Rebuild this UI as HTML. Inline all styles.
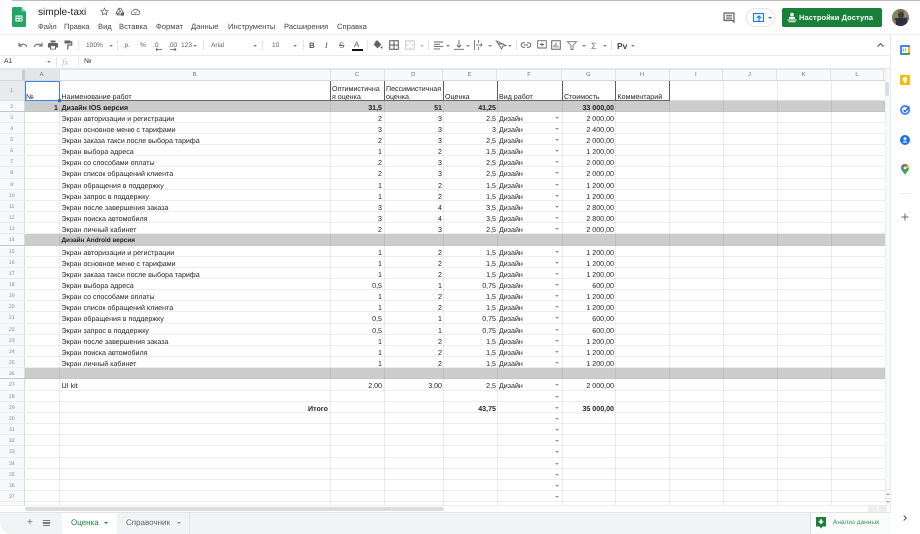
<!DOCTYPE html>
<html lang="ru"><head><meta charset="utf-8"><title>simple-taxi</title>
<style>
*{box-sizing:border-box;margin:0;padding:0}
html,body{width:920px;height:534px;overflow:hidden;background:#fff;font-family:"Liberation Sans",sans-serif;color:#222;text-rendering:geometricPrecision}
#w{position:absolute;left:0;top:0;width:920px;height:534px;overflow:hidden;filter:blur(.3px)}
.abs,.t{position:absolute}
.t{white-space:nowrap;line-height:10px}
#top{position:absolute;left:12px;right:0;top:0;height:1px;background:#bbb}
.menu{font-size:7.6px;color:#444;top:21.500px}
.tb{font-size:6.6px;color:#5f6368;top:40.500px}
.sep{position:absolute;width:1px;background:#e3e5e8;top:40px;height:10px}
.ar{position:absolute;width:0;height:0;border-left:2px solid transparent;border-right:2px solid transparent;border-top:2.4px solid #888}
svg{position:absolute;overflow:visible}
#hdr{position:absolute;left:0;top:69px;width:885px;height:12px;background:#f8f9fa;border-top:1px solid #e3e5e8;border-bottom:1px solid #d5d7d9}
#hdr span{position:absolute;top:0;height:10px;line-height:11px;text-align:center;font-size:5.8px;color:#777;border-right:1px solid #dfe1e3}
#grid{position:absolute;left:0;top:81px;width:885px;height:424px;overflow:hidden}
.r{position:relative;height:11.17px;font-size:7.100px;line-height:14.600px;color:#222;border-bottom:1px solid #eceded}
.r span{position:absolute;top:0;white-space:nowrap}
.n{left:0;width:24.5px;height:100%;text-align:center;background:#f8f9fa;font-size:5.2px;line-height:12.500px;color:#888;border-right:1px solid #dadcde}
.a{right:827px}
.b{left:61.5px}
.c{right:503px}
.d{right:443px}
.e{right:389px}
.f{left:499px}
.g{right:271px}
.v{left:554.5px;top:5px!important;width:0;height:0;border-left:2px solid transparent;border-right:2px solid transparent;border-top:2.2px solid #999}
.gr{background:#ccc;border-bottom:1px solid #c6c6c6;font-weight:bold}
.gr .n{font-weight:normal;background:#f8f9fa}
.vl{position:absolute;top:81px;height:424px;width:1px;background:rgba(0,0,0,.07)}
#r1{position:relative;height:19.5px;font-size:7.100px;line-height:8.6px;color:#222;border-bottom:1px solid #ddd}
#r1 span{position:absolute;bottom:-2.500px;white-space:nowrap}
#r1 i{position:absolute;top:0;height:19.5px;width:1px;background:#666}
#side{position:absolute;left:890px;top:35px;width:1px;height:478px;background:#e8eaed}
#tabs{position:absolute;left:0;top:512px;width:890px;height:21.5px;background:#f1f3f4;border-top:1px solid #e2e3e5;border-bottom-left-radius:12px}
</style></head><body><div id="w">
<div id="top"></div>

<svg style="left:12px;top:7px" width="14" height="20" viewBox="0 0 14 20"><path d="M1.5 0H9.5L14 4.5V18.5A1.5 1.5 0 0 1 12.5 20H1.5A1.5 1.5 0 0 1 0 18.5V1.5A1.5 1.5 0 0 1 1.5 0Z" fill="#23a566"/><path d="M9.5 0V4.5H14Z" fill="#8ed1b1"/><path d="M3.5 8.5H10.5V14.5H3.5ZM4.5 9.5V11H6.5V9.5ZM7.5 9.5V11H9.5V9.5ZM4.5 12V13.5H6.5V12ZM7.5 12V13.5H9.5V12Z" fill="#fff" fill-rule="evenodd"/></svg>
<div class="t" style="left:38px;top:7.500px;font-size:10.100px;color:#222">simple-taxi</div>
<svg style="left:100px;top:7px" width="9" height="9" viewBox="0 0 24 24"><path d="M12 3l2.8 6.2 6.7.7-5 4.5 1.4 6.6L12 17.6 6.1 21l1.4-6.6-5-4.5 6.7-.7z" fill="none" stroke="#5f6368" stroke-width="2"/></svg>
<svg style="left:115px;top:7px" width="10" height="10" viewBox="0 0 24 24"><path d="M9 3h5l7 12-2.5 4H6L2.500 15zM9 3l5 9M6 19l5-9M2.500 15H13" fill="none" stroke="#5f6368" stroke-width="2"/><circle cx="18" cy="17" r="4" fill="#5f6368"/></svg>
<svg style="left:131px;top:8px" width="9" height="8" viewBox="0 0 24 20"><path d="M6 17A5 5 0 0 1 5.500 7 7.500 7.500 0 0 1 19 6.500 5.300 5.300 0 0 1 18.500 17Z" fill="none" stroke="#5f6368" stroke-width="2.200"/><path d="M8.500 11l3 2.500 4-4.500" fill="none" stroke="#5f6368" stroke-width="1.800"/></svg>

<div class="t menu" style="left:38px">Файл</div>
<div class="t menu" style="left:64px">Правка</div>
<div class="t menu" style="left:98px">Вид</div>
<div class="t menu" style="left:119px">Вставка</div>
<div class="t menu" style="left:156px">Формат</div>
<div class="t menu" style="left:191px">Данные</div>
<div class="t menu" style="left:228px">Инструменты</div>
<div class="t menu" style="left:284px">Расширения</div>
<div class="t menu" style="left:337px">Справка</div>

<svg style="left:723px;top:12px" width="12" height="11" viewBox="0 0 12 11"><path d="M1 1H11V10L9.500 8.500H1Z" fill="#f1f3f4" stroke="#5f6368" stroke-width="1.200"/><path d="M3 3.300H9M3 5H9M3 6.700H9" stroke="#5f6368" stroke-width=".8"/></svg>
<div class="abs" style="left:746px;top:8px;width:29px;height:19px;border:1px solid #e3e5e8;border-radius:10px;background:#fff"></div>
<div class="abs" style="left:753px;top:13px;width:11px;height:9px;border:1.400px solid #1a73e8;background:#e8f0fe"></div>
<svg style="left:755.500px;top:14.500px" width="6" height="6" viewBox="0 0 6 6"><path d="M3 6V1.500M1 3L3 1 5 3" fill="none" stroke="#1a73e8" stroke-width="1.100"/></svg>
<div class="ar" style="left:768px;top:16.500px;border-top-color:#1a73e8"></div>
<div class="abs" style="left:782px;top:8px;width:100px;height:19px;background:#188038;border-radius:2px"></div>
<svg style="left:787px;top:12px" width="10" height="11" viewBox="0 0 10 11"><circle cx="5" cy="2.500" r="1.800" fill="#fff"/><path d="M2.500 4.800H7.500L8 7H2ZM0.500 7.500H9.500V8.500H0.500ZM1.500 9.300H8.500V10.300H1.500Z" fill="#fff"/></svg>
<div class="t" style="left:799px;top:12.500px;font-size:7.500px;font-weight:bold;color:#fff;letter-spacing:.1px">Настройки Доступа</div>
<svg style="left:892px;top:9px" width="17" height="17" viewBox="0 0 17 17"><defs><clipPath id="av"><circle cx="8.500" cy="8.500" r="8.500"/></clipPath></defs><g clip-path="url(#av)"><rect width="17" height="17" fill="#6f6f5c"/><rect x="0" y="0" width="6" height="10" fill="#7a8a63"/><rect x="12" y="0" width="5" height="8" fill="#8c8a78"/><rect x="3" y="9" width="12" height="8" fill="#2b3042"/><circle cx="9" cy="6" r="3" fill="#4a3a30"/><rect x="0" y="11" width="4" height="6" fill="#9b6a4a"/></g></svg>

<div class="abs" style="left:0;top:34px;width:920px;height:1px;background:#eceef0"></div>
<div class="abs" style="left:0;top:55px;width:890px;height:1px;background:#e8eaed"></div>

<svg style="left:18px;top:41px" width="10" height="8" viewBox="0 0 10 8"><path d="M1 1.500V5H4.500M1.300 4.800C3 2.500 7 2.200 9 5.800" fill="none" stroke="#5f6368" stroke-width="1"/></svg>
<svg style="left:33px;top:41px" width="10" height="8" viewBox="0 0 10 8"><path d="M9 1.500V5H5.500M8.700 4.800C7 2.500 3 2.200 1 5.800" fill="none" stroke="#5f6368" stroke-width="1"/></svg>
<svg style="left:48px;top:40px" width="10" height="10" viewBox="0 0 10 10"><path d="M2.500 0.500H7.500V2.500H2.500ZM1 3H9A1 1 0 0 1 10 4V7.500H8V9.500H2V7.500H0V4A1 1 0 0 1 1 3Z" fill="#5f6368"/><rect x="3" y="6" width="4" height="2.700" fill="#fff"/></svg>
<svg style="left:64px;top:40px" width="8" height="10" viewBox="0 0 8 10"><path d="M0.500 0.500H6.500V3.500H0.500Z" fill="#5f6368"/><path d="M6.500 2H7.700V5H3.800V9.500" fill="none" stroke="#5f6368" stroke-width="1.200"/></svg>
<div class="sep" style="left:78px"></div>
<div class="t tb" style="left:86px">100%</div><div class="ar" style="left:109px;top:44.500px"></div>
<div class="sep" style="left:117px"></div>
<div class="t tb" style="left:124.500px">р.</div>
<div class="t tb" style="left:140px">%</div>
<div class="t tb" style="left:153px">.0</div>
<svg style="left:155px;top:48px" width="7" height="3" viewBox="0 0 7 3"><path d="M7 1.500H1M2.500 0L1 1.500 2.500 3" fill="none" stroke="#555" stroke-width=".7"/></svg>
<div class="t tb" style="left:168px">.00</div>
<svg style="left:170px;top:48px" width="7" height="3" viewBox="0 0 7 3"><path d="M0 1.500H6M4.500 0L6 1.500 4.500 3" fill="none" stroke="#555" stroke-width=".7"/></svg>
<div class="t tb" style="left:181px">123</div><div class="ar" style="left:193px;top:44.500px"></div>
<div class="sep" style="left:203px"></div>
<div class="t tb" style="left:211px">Arial</div><div class="ar" style="left:253px;top:44.500px"></div>
<div class="sep" style="left:262px"></div>
<div class="t tb" style="left:272px">10</div><div class="ar" style="left:293px;top:44.500px"></div>
<div class="sep" style="left:303px"></div>
<div class="t" style="left:309px;top:40.500px;font-size:8px;font-weight:bold;color:#555">B</div>
<div class="t" style="left:325px;top:40.500px;font-size:8px;font-style:italic;font-family:'Liberation Serif',serif;color:#555">I</div>
<div class="t" style="left:339px;top:40.500px;font-size:8px;color:#666;text-decoration:line-through">S</div>
<div class="t" style="left:354px;top:39.500px;font-size:8px;color:#555">A</div>
<div class="abs" style="left:352px;top:49px;width:11px;height:2px;background:#111"></div>
<div class="sep" style="left:367px"></div>
<svg style="left:373px;top:40px" width="10" height="10" viewBox="0 0 10 10"><path d="M4 0.500L8 4.500 4.500 8 1 4.500ZM2.500 1L4 2.500" fill="#5f6368" stroke="#5f6368" stroke-width=".6"/><circle cx="8.500" cy="7.500" r="1" fill="#5f6368"/></svg>
<svg style="left:389px;top:40px" width="10" height="10" viewBox="0 0 10 10"><path d="M.700.700H9.300V9.300H.700ZM5 1V9M1 5H9" fill="none" stroke="#555" stroke-width="1"/></svg>
<svg style="left:405px;top:40px" width="10" height="10" viewBox="0 0 10 10"><path d="M.700.700H9.300V9.300H.700ZM1 5H3.500M6.500 5H9M5 1V3M5 7V9" fill="none" stroke="#c9ccd0" stroke-width="1"/></svg>
<div class="ar" style="left:419.500px;top:44.500px;border-top-color:#bbb"></div>
<div class="sep" style="left:428px"></div>
<svg style="left:434px;top:41px" width="10" height="9" viewBox="0 0 10 9"><path d="M0 1H9M0 3.300H6M0 5.600H9M0 7.900H6" stroke="#666" stroke-width=".9"/></svg><div class="ar" style="left:446px;top:44.500px"></div>
<svg style="left:454px;top:40px" width="10" height="10" viewBox="0 0 10 10"><path d="M0 9.300H10M5 0V7M2.800 5L5 7.200 7.200 5" fill="none" stroke="#666" stroke-width=".9"/></svg><div class="ar" style="left:466px;top:44.500px"></div>
<svg style="left:474px;top:40px" width="10" height="10" viewBox="0 0 10 10"><path d="M.600 0V10M2 5H8M6.500 3.500L8 5 6.500 6.500M4.500 0V3M4.500 7V10" fill="none" stroke="#666" stroke-width=".8"/></svg><div class="ar" style="left:488px;top:44.500px"></div>
<svg style="left:496px;top:40px" width="10" height="10" viewBox="0 0 10 10"><path d="M0.500 1L5.500 9 7 6 10 5.500ZM2 4H8" fill="none" stroke="#666" stroke-width=".9"/></svg><div class="ar" style="left:508px;top:44.500px"></div>
<div class="sep" style="left:516px"></div>
<svg style="left:521px;top:42px" width="10" height="6" viewBox="0 0 10 6"><path d="M4 .700H2.500A2.300 2.300 0 0 0 2.500 5.300H4M6 .700H7.500A2.300 2.300 0 0 1 7.500 5.300H6M3 3H7" fill="none" stroke="#666" stroke-width="1"/></svg>
<svg style="left:537px;top:40px" width="10" height="10" viewBox="0 0 10 10"><path d="M.700.700H9.300V8H.700ZM5 2.500V6.500M3 4.500H7" fill="none" stroke="#666" stroke-width=".9"/></svg>
<svg style="left:551px;top:40px" width="10" height="10" viewBox="0 0 10 10"><path d="M.700.700H9.300V9.300H.700Z" fill="none" stroke="#666" stroke-width="1"/><path d="M3 7.500V5M5 7.500V2.800M7 7.500V6" stroke="#666" stroke-width="1"/></svg>
<svg style="left:567px;top:41px" width="10" height="9" viewBox="0 0 10 9"><path d="M.500.700H9.500L6 4.500V8.500H4V4.500Z" fill="none" stroke="#777" stroke-width=".9"/></svg><div class="ar" style="left:582px;top:44.500px"></div>
<div class="t" style="left:591px;top:40.500px;font-size:9px;color:#777">Σ</div><div class="ar" style="left:603px;top:44.500px"></div>
<div class="sep" style="left:611px"></div>
<div class="t" style="left:617px;top:40.500px;font-size:8.500px;font-weight:bold;color:#444">Рv</div><div class="ar" style="left:631px;top:44.500px"></div>
<svg style="left:877px;top:43px" width="7" height="4" viewBox="0 0 7 4"><path d="M.500 3.500L3.500.700 6.500 3.500" fill="none" stroke="#5f6368" stroke-width="1.200"/></svg>

<div class="t" style="left:4px;top:57px;font-size:6.800px;color:#333">A1</div>
<div class="ar" style="left:47px;top:61px"></div>
<div class="abs" style="left:56px;top:57px;width:1px;height:10px;background:#e3e5e8"></div>
<div class="t" style="left:62px;top:56.500px;font-size:9px;font-style:italic;font-family:'Liberation Serif',serif;color:#bbb">fx</div>
<div class="abs" style="left:78px;top:57px;width:1px;height:10px;background:#e3e5e8"></div>
<div class="t" style="left:84px;top:57px;font-size:6.900px;color:#333">№</div>
<div class="abs" style="left:0;top:68px;width:890px;height:1px;background:#e3e5e8"></div>

<div id="hdr">
<span style="left:0;width:24.500px;background:#eceef0;border-right:3px solid #c8cacc"></span>
<span style="left:24.500px;width:35px;background:#e3e5e7">A</span>
<span style="left:59.500px;width:271px">B</span>
<span style="left:330.500px;width:54px">C</span>
<span style="left:384.500px;width:58.500px">D</span>
<span style="left:443px;width:54px">E</span>
<span style="left:497px;width:65px">F</span>
<span style="left:562px;width:53.500px">G</span>
<span style="left:615.500px;width:54px">H</span>
<span style="left:669.500px;width:53.500px">I</span>
<span style="left:723px;width:54px">J</span>
<span style="left:777px;width:54px">K</span>
<span style="left:831px;width:53px">L</span>
</div>

<div id="grid">
<div id="r1"><span class="n" style="bottom:0;top:0;line-height:20px;background:#e8eaed">1</span>
<span style="left:26px">№</span><span class="b">Наименование работ</span>
<span style="left:332px">Оптимистична<br>я оценка</span><span style="left:386px">Пессимистичная<br>оценка</span><span style="left:445px">Оценка</span><span style="left:499px">Вид работ</span><span style="left:564px">Стоимость</span><span style="left:617.500px">Комментарий</span>
<i style="left:330px"></i><i style="left:384px"></i><i style="left:443px"></i><i style="left:497px"></i><i style="left:562px"></i><i style="left:615px"></i><i style="left:669px"></i>
<b style="position:absolute;left:60px;width:610px;bottom:-1px;height:1px;background:#666"></b>
</div>
<div class="r gr"><span class="n">2</span><span class="a">1</span><span class="b">Дизайн IOS версия</span><span class="c">31,5</span><span class="d">51</span><span class="e">41,25</span><span class="g">33 000,00</span></div>
<div class="r"><span class="n">3</span><span class="b">Экран авторизации и регистрации</span><span class="c">2</span><span class="d">3</span><span class="e">2,5</span><span class="f">Дизайн</span><span class="v"></span><span class="g">2 000,00</span></div>
<div class="r"><span class="n">4</span><span class="b">Экран основное меню с тарифами</span><span class="c">3</span><span class="d">3</span><span class="e">3</span><span class="f">Дизайн</span><span class="v"></span><span class="g">2 400,00</span></div>
<div class="r"><span class="n">5</span><span class="b">Экран заказа такси после выбора тарифа</span><span class="c">2</span><span class="d">3</span><span class="e">2,5</span><span class="f">Дизайн</span><span class="v"></span><span class="g">2 000,00</span></div>
<div class="r"><span class="n">6</span><span class="b">Экран выбора адреса</span><span class="c">1</span><span class="d">2</span><span class="e">1,5</span><span class="f">Дизайн</span><span class="v"></span><span class="g">1 200,00</span></div>
<div class="r"><span class="n">7</span><span class="b">Экран со способами оплаты</span><span class="c">2</span><span class="d">3</span><span class="e">2,5</span><span class="f">Дизайн</span><span class="v"></span><span class="g">2 000,00</span></div>
<div class="r"><span class="n">8</span><span class="b">Экран список обращений клиента</span><span class="c">2</span><span class="d">3</span><span class="e">2,5</span><span class="f">Дизайн</span><span class="v"></span><span class="g">2 000,00</span></div>
<div class="r"><span class="n">9</span><span class="b">Экран обращения в поддержку</span><span class="c">1</span><span class="d">2</span><span class="e">1,5</span><span class="f">Дизайн</span><span class="v"></span><span class="g">1 200,00</span></div>
<div class="r"><span class="n">10</span><span class="b">Экран запрос в поддержку</span><span class="c">1</span><span class="d">2</span><span class="e">1,5</span><span class="f">Дизайн</span><span class="v"></span><span class="g">1 200,00</span></div>
<div class="r"><span class="n">11</span><span class="b">Экран после завершения заказа</span><span class="c">3</span><span class="d">4</span><span class="e">3,5</span><span class="f">Дизайн</span><span class="v"></span><span class="g">2 800,00</span></div>
<div class="r"><span class="n">12</span><span class="b">Экран поиска автомобиля</span><span class="c">3</span><span class="d">4</span><span class="e">3,5</span><span class="f">Дизайн</span><span class="v"></span><span class="g">2 800,00</span></div>
<div class="r"><span class="n">13</span><span class="b">Экран личный кабинет</span><span class="c">2</span><span class="d">3</span><span class="e">2,5</span><span class="f">Дизайн</span><span class="v"></span><span class="g">2 000,00</span></div>
<div class="r gr"><span class="n">14</span><span class="b" style="font-size:6.400px">Дизайн Android версия</span></div>
<div class="r"><span class="n">15</span><span class="b">Экран авторизации и регистрации</span><span class="c">1</span><span class="d">2</span><span class="e">1,5</span><span class="f">Дизайн</span><span class="v"></span><span class="g">1 200,00</span></div>
<div class="r"><span class="n">16</span><span class="b">Экран основное меню с тарифами</span><span class="c">1</span><span class="d">2</span><span class="e">1,5</span><span class="f">Дизайн</span><span class="v"></span><span class="g">1 200,00</span></div>
<div class="r"><span class="n">17</span><span class="b">Экран заказа такси после выбора тарифа</span><span class="c">1</span><span class="d">2</span><span class="e">1,5</span><span class="f">Дизайн</span><span class="v"></span><span class="g">1 200,00</span></div>
<div class="r"><span class="n">18</span><span class="b">Экран выбора адреса</span><span class="c">0,5</span><span class="d">1</span><span class="e">0,75</span><span class="f">Дизайн</span><span class="v"></span><span class="g">600,00</span></div>
<div class="r"><span class="n">19</span><span class="b">Экран со способами оплаты</span><span class="c">1</span><span class="d">2</span><span class="e">1,5</span><span class="f">Дизайн</span><span class="v"></span><span class="g">1 200,00</span></div>
<div class="r"><span class="n">20</span><span class="b">Экран список обращений клиента</span><span class="c">1</span><span class="d">2</span><span class="e">1,5</span><span class="f">Дизайн</span><span class="v"></span><span class="g">1 200,00</span></div>
<div class="r"><span class="n">21</span><span class="b">Экран обращения в поддержку</span><span class="c">0,5</span><span class="d">1</span><span class="e">0,75</span><span class="f">Дизайн</span><span class="v"></span><span class="g">600,00</span></div>
<div class="r"><span class="n">22</span><span class="b">Экран запрос в поддержку</span><span class="c">0,5</span><span class="d">1</span><span class="e">0,75</span><span class="f">Дизайн</span><span class="v"></span><span class="g">600,00</span></div>
<div class="r"><span class="n">23</span><span class="b">Экран после завершения заказа</span><span class="c">1</span><span class="d">2</span><span class="e">1,5</span><span class="f">Дизайн</span><span class="v"></span><span class="g">1 200,00</span></div>
<div class="r"><span class="n">24</span><span class="b">Экран поиска автомобиля</span><span class="c">1</span><span class="d">2</span><span class="e">1,5</span><span class="f">Дизайн</span><span class="v"></span><span class="g">1 200,00</span></div>
<div class="r"><span class="n">25</span><span class="b">Экран личный кабинет</span><span class="c">1</span><span class="d">2</span><span class="e">1,5</span><span class="f">Дизайн</span><span class="v"></span><span class="g">1 200,00</span></div>
<div class="r gr"><span class="n">26</span></div>
<div class="r"><span class="n">27</span><span class="b">UI kit</span><span class="c">2,00</span><span class="d">3,00</span><span class="e">2,5</span><span class="f">Дизайн</span><span class="v"></span><span class="g">2 000,00</span></div>
<div class="r"><span class="n">28</span><span class="v"></span></div>
<div class="r" style="font-weight:bold"><span class="n" style="font-weight:normal">29</span><span style="right:557px">Итого</span><span class="e">43,75</span><span class="v"></span><span class="g">35 000,00</span></div>
<div class="r"><span class="n">30</span><span class="v"></span></div>
<div class="r"><span class="n">31</span><span class="v"></span></div>
<div class="r"><span class="n">32</span><span class="v"></span></div>
<div class="r"><span class="n">33</span><span class="v"></span></div>
<div class="r"><span class="n">34</span><span class="v"></span></div>
<div class="r"><span class="n">35</span><span class="v"></span></div>
<div class="r"><span class="n">36</span><span class="v"></span></div>
<div class="r"><span class="n">37</span><span class="v"></span></div>
<div class="r"><span class="n"></span></div>
</div>

<div class="vl" style="left:59px"></div><div class="vl" style="left:330px"></div><div class="vl" style="left:384px"></div><div class="vl" style="left:443px"></div><div class="vl" style="left:497px"></div><div class="vl" style="left:562px"></div><div class="vl" style="left:615px"></div><div class="vl" style="left:669px"></div><div class="vl" style="left:723px"></div><div class="vl" style="left:777px"></div><div class="vl" style="left:831px"></div>

<div class="abs" style="left:25px;top:81px;width:35px;height:20px;border:1px solid #3b82ea"></div>
<div class="abs" style="left:58px;top:99px;width:3px;height:3px;background:#1a73e8"></div>

<div class="abs" style="left:885px;top:69px;width:5px;height:444px;background:#f8f9fa;border-left:1px solid #eceef0"></div>
<div class="abs" style="left:885px;top:82px;width:4px;height:14px;background:#dadce0;border-radius:2px"></div>
<div class="abs" style="left:885px;top:489px;width:5px;height:1px;background:#e3e3e3"></div>
<div class="abs" style="left:885px;top:498px;width:5px;height:1px;background:#e3e3e3"></div>
<div class="ar" style="left:885.500px;top:493px;border-top:0;border-bottom:2px solid #aaa"></div>
<div class="ar" style="left:885.500px;top:501px;border-top-width:2px;border-top-color:#aaa"></div>

<div class="abs" style="left:0;top:505px;width:890px;height:7px;background:#fff;border-top:1px solid #eceef0"></div>
<div class="abs" style="left:25px;top:507px;width:419px;height:4px;background:#dadce0;border-radius:2px"></div>
<div class="abs" style="left:868px;top:506px;width:9px;height:6px;background:#eceef0"></div>
<div class="abs" style="left:878px;top:506px;width:9px;height:6px;background:#eceef0"></div>

<div id="tabs">
<div class="t" style="left:27px;top:5px;font-size:10px;color:#666">+</div>
<div class="abs" style="left:43px;top:6.500px;width:7px;height:1.500px;background:#777"></div>
<div class="abs" style="left:43px;top:9px;width:7px;height:1.500px;background:#777"></div>
<div class="abs" style="left:43px;top:11.500px;width:7px;height:1.500px;background:#777"></div>
<div class="abs" style="left:62px;top:0;width:55px;height:21px;background:#fff"></div>
<div class="t" style="left:71px;top:5px;font-size:8px;color:#188038">Оценка</div>
<div class="ar" style="left:104px;top:8.500px;border-top-color:#188038"></div>
<div class="t" style="left:126px;top:5px;font-size:8px;color:#5f6368">Справочник</div>
<div class="ar" style="left:176.500px;top:8.500px"></div>
<div class="abs" style="left:189px;top:0;width:1px;height:21px;background:#e2e3e5"></div>
<div class="abs" style="left:810px;top:0;width:80px;height:20.500px;background:#fafbfb;border-left:1px solid #dadce0"></div>
<svg style="left:816px;top:4px" width="10" height="12" viewBox="0 0 10 12"><path d="M0 0H10V9.500H6.500L5 11.500 3.500 9.500H0Z" fill="#188038"/><path d="M5 2.300V7M2.700 4.700H7.300" stroke="#fff" stroke-width="1.600"/></svg>
<div class="t" style="left:833px;top:5px;font-size:6.500px;color:#188038;opacity:.85">Анализ данных</div>
</div>

<div id="side"></div>
<svg style="left:900px;top:45px" width="10" height="10" viewBox="0 0 10 10"><rect width="10" height="10" rx="1" fill="#4285f4"/><rect x="2" y="2" width="6" height="6" fill="#fff"/><path d="M8 2H10V8H8Z" fill="#fbbc04"/><path d="M2 8H8V10H2Z" fill="#34a853"/><path d="M8 8H10L8 10Z" fill="#ea4335"/><path d="M3.500 3.500V6.500M5.500 3.500V6.500" stroke="#4285f4" stroke-width=".7"/></svg>
<svg style="left:900px;top:75px" width="10" height="10" viewBox="0 0 10 10"><rect width="10" height="10" rx="1" fill="#fbbc04"/><circle cx="5" cy="4.200" r="2.300" fill="#fff"/><rect x="3.800" y="6" width="2.400" height="2" fill="#fff"/></svg>
<svg style="left:900px;top:105px" width="10" height="10" viewBox="0 0 10 10"><circle cx="5" cy="5" r="4" fill="none" stroke="#4285f4" stroke-width="2"/><path d="M3.500 5L5 6.500 9.500 1.500" fill="none" stroke="#1a5cc8" stroke-width="1.300"/></svg>
<svg style="left:900px;top:135px" width="10" height="10" viewBox="0 0 10 10"><circle cx="5" cy="5" r="5" fill="#1a73e8"/><circle cx="5" cy="3.700" r="1.500" fill="#fff"/><path d="M2.500 7.500C3 5.800 7 5.800 7.500 7.500Z" fill="#fff"/></svg>
<svg style="left:901px;top:164px" width="8" height="11" viewBox="0 0 8 11"><path d="M4 0C1.800 0 0 1.700 0 3.900 0 6.500 3 8.500 4 11 5 8.500 8 6.500 8 3.900 8 1.700 6.200 0 4 0Z" fill="#34a853"/><path d="M4 0C5 0 6 .4 6.800 1.100L1.200 7C.4 6 0 5 0 3.900 0 1.700 1.800 0 4 0Z" fill="#4285f4"/><path d="M1.200 1.100L4 0 4 2 2.500 3.500 .5 2.500Z" fill="#ea4335"/><path d="M6.800 1.100C7.500 1.800 8 2.800 8 3.900L5 4.500 5 2.800Z" fill="#fbbc04"/><circle cx="4" cy="3.900" r="1.300" fill="#fff"/></svg>
<div class="abs" style="left:900px;top:192.500px;width:11px;height:1px;background:#e8eaed"></div>
<svg style="left:901px;top:213px" width="8" height="8" viewBox="0 0 8 8"><path d="M4 .500V7.500M.500 4H7.500" stroke="#666" stroke-width="1"/></svg>
<svg style="left:903px;top:515px" width="4" height="6" viewBox="0 0 4 6"><path d="M.700.500L3.300 3 .700 5.500" fill="none" stroke="#555" stroke-width="1.100"/></svg>
</div></body></html>
